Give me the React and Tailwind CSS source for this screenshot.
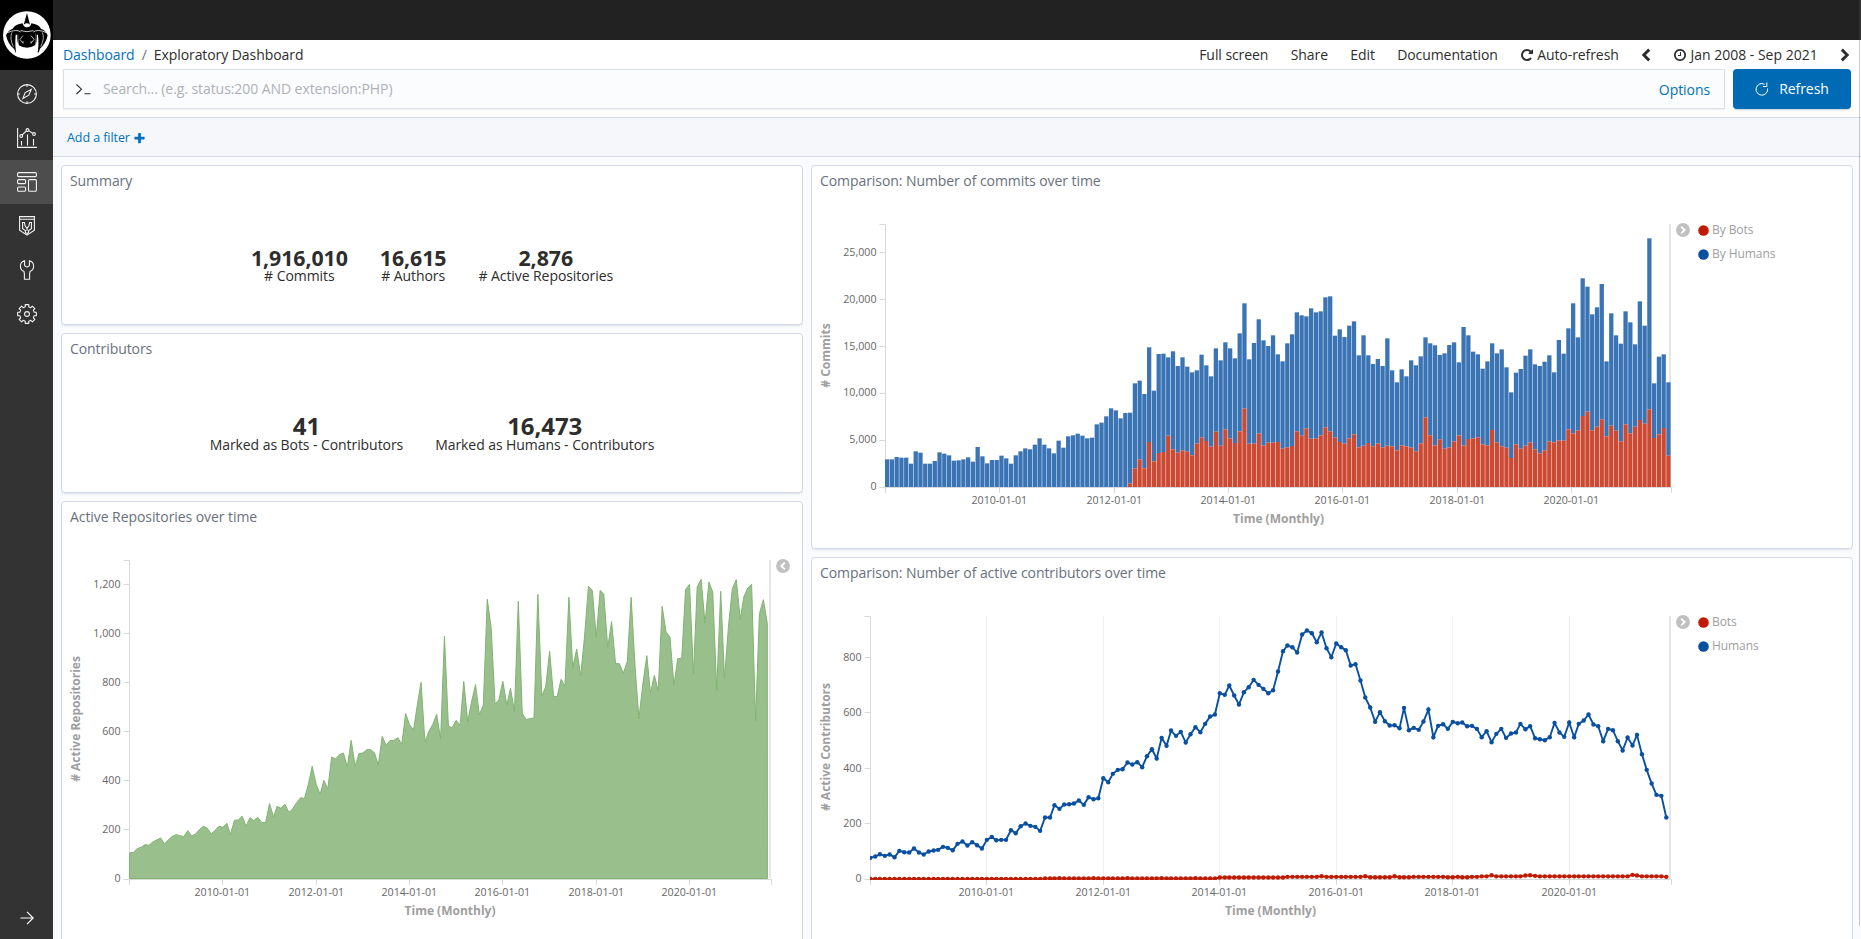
import React from "react";

/* ---------- time axis ---------- */
const DAY = 86400000;
const START = Date.UTC(2008, 0, 1);
const dayOf = (m) => (Date.UTC(2008, m, 1) - START) / DAY;
const YEARS = [2010, 2012, 2014, 2016, 2018, 2020];

/* ---------- monthly series, Jan 2008 - Sep 2021, as depths on a 1/3 px grid ---------- */
const REPOS = [
  968, 966, 955, 951, 943, 945, 935, 929, 923, 941, 928, 918, 913, 916, 919, 901, 917, 911, 898, 888, 894, 911, 900, 888,
  891, 879, 913, 870, 869, 858, 888, 862, 871, 861, 877, 877, 820, 860, 828, 834, 822, 846, 836, 817, 802, 805, 762, 708,
  762, 792, 750, 776, 680, 686, 673, 668, 710, 630, 708, 670, 668, 658, 658, 667, 704, 618, 645, 631, 630, 622, 642, 550,
  583, 599, 528, 456, 635, 603, 583, 552, 626, 318, 588, 592, 570, 585, 453, 574, 515, 463, 553, 525, 207, 290, 521, 509,
  453, 524, 474, 544, 213, 549, 568, 565, 563, 192, 497, 470, 363, 498, 499, 447, 468, 201, 412, 356, 437, 320, 168, 180,
  320, 180, 192, 352, 274, 400, 400, 429, 393, 201, 410, 565, 460, 376, 488, 435, 482, 228, 305, 320, 465, 385, 384, 178,
  162, 431, 170, 147, 279, 155, 186, 480, 183, 445, 287, 175, 148, 267, 200, 173, 162, 571, 250, 208, 280,
];
const COMMITS = [
  778, 778, 771, 773, 773, 791, 754, 758, 791, 791, 783, 757, 761, 766, 782, 781, 778, 772, 785, 741, 769, 790, 780, 780,
  767, 775, 791, 766, 754, 745, 748, 734, 715, 734, 745, 760, 722, 743, 709, 706, 701, 707, 715, 713, 673, 668, 649, 625,
  631, 655, 639, 638, 550, 542, 582, 442, 572, 462, 461, 472, 454, 498, 472, 500, 517, 511, 464, 496, 529, 445, 481, 427,
  445, 475, 400, 310, 478, 429, 358, 421, 438, 406, 463, 484, 430, 403, 337, 346, 349, 325, 337, 334, 292, 289, 407, 388,
  411, 377, 364, 466, 406, 466, 492, 477, 498, 415, 511, 547, 508, 529, 481, 496, 469, 412, 430, 436, 465, 460, 435, 427,
  487, 381, 406, 455, 463, 506, 484, 430, 460, 448, 502, 577, 518, 507, 467, 448, 493, 498, 485, 466, 517, 420, 461, 385,
  310, 412, 235, 260, 343, 322, 252, 484, 340, 406, 431, 334, 367, 433, 304, 377, 115, 550, 470, 463, 547,
];
/* bots only start committing in month 51 */
const BOT_COMMITS_FROM = 51;
const BOT_COMMITS = [
  850, 805, 778, 805, 726, 784, 759, 756, 707, 748, 758, 751, 755, 766, 731, 712, 723, 740, 695, 737, 688,
  715, 729, 694, 626, 731, 731, 700, 737, 728, 728, 726, 746, 742, 738, 694, 707, 685, 716, 716, 706, 682, 694, 712, 726,
  731, 715, 703, 742, 737, 729, 739, 730, 742, 737, 739, 751, 736, 739, 743, 754, 730, 652, 706, 736, 718, 746, 742, 724,
  706, 737, 717, 715, 712, 733, 736, 690, 727, 739, 743, 774, 733, 746, 737, 727, 748, 760, 751, 724, 727, 721, 722, 688,
  700, 691, 648, 635, 691, 680, 658, 709, 677, 692, 724, 673, 700, 680, 660, 671, 628, 714, 703, 684, 767,
];
const HUMANS = [
  803, 799, 792, 797, 793, 801, 782, 786, 787, 775, 787, 793, 784, 781, 779, 770, 773, 780, 761, 754, 766, 756, 765, 775,
  749, 740, 750, 749, 749, 720, 729, 708, 700, 707, 710, 722, 682, 682, 645, 656, 643, 642, 640, 631, 644, 621, 627, 624,
  564, 576, 551, 539, 537, 517, 523, 516, 531, 498, 477, 505, 443, 467, 421, 437, 425, 457, 432, 411, 426, 401, 379, 373,
  309, 314, 286, 316, 343, 306, 291, 269, 284, 296, 309, 300, 244, 183, 166, 171, 187, 133, 121, 129, 156, 127, 174, 201,
  160, 171, 180, 226, 222, 271, 322, 352, 395, 366, 393, 406, 405, 414, 353, 420, 413, 419, 394, 358, 441, 407, 402, 416,
  395, 399, 397, 408, 407, 416, 441, 423, 456, 431, 416, 443, 430, 427, 401, 417, 408, 444, 447, 450, 441, 398, 427, 440,
  397, 441, 401, 391, 373, 403, 408, 453, 416, 420, 453, 481, 442, 466, 434, 492, 539, 580, 614, 617, 682,
];
const BOTS = HUMANS.map((_, m) => {
  if (m < 36) return 866;
  if (m < 72) return m % 7 === 4 ? 864 : 865;
  if (m < 86) return 862;
  const peaks = { 93: 858, 102: 858, 108: 858, 128: 855, 135: 856, 136: 855, 137: 857, 157: 854, 158: 856, 164: 860 };
  if (peaks[m]) return peaks[m];
  if ([103, 104, 105, 106, 107, 109, 110, 111, 119, 120, 122, 123].includes(m)) return 861;
  return m > 125 ? 858.5 : 860;
});

/* ---------- chart pieces ---------- */
const AXIS = "#d9d9d9";

function XAxis({ x0, x1, y, xOf, title, titleX }) {
  return (
    <g>
      <path d={`M${x0} ${y + 5.5}V${y}H${x1}V${y + 5.5}`} fill="none" stroke={AXIS} />
      {YEARS.map((year) => {
        const x = Math.floor(xOf(year)) + 0.5;
        return (
          <g key={year}>
            <path d={`M${x} ${y}v5.5`} stroke={AXIS} />
            <text x={x - 0.2} y={y + 16} textAnchor="middle" className="fill-[#666] text-[10.67px]">
              {year}-01-01
            </text>
          </g>
        );
      })}
      <text x={titleX} y={y + 35} textAnchor="middle" className="fill-[#9e9e9e] text-[12px] font-bold">
        {title}
      </text>
    </g>
  );
}

function YAxis({ x, top, bottom, ticks, title, titleX, titleY }) {
  return (
    <g>
      <path d={`M${x - 6} ${top}H${x}V${bottom}H${x - 6}`} fill="none" stroke={AXIS} />
      {ticks.map(([label, y, lift = 0]) => (
        <g key={label}>
          <path d={`M${x - 6} ${y}h6`} stroke={AXIS} />
          <text x={x - 9} y={y + 3 - lift} textAnchor="end" className="fill-[#666] text-[10.67px]">
            {label}
          </text>
        </g>
      ))}
      <text
        transform={`translate(${titleX} ${titleY}) rotate(-90)`}
        textAnchor="middle"
        className="fill-[#9e9e9e] text-[12px] font-bold"
      >
        {title}
      </text>
    </g>
  );
}

const yearDays = (year) => dayOf((year - 2008) * 12);

function ReposChart() {
  const xOf = (d) => 129.5 + d * 0.12777;
  const line = REPOS.map((v, m) => `${xOf(dayOf(m)).toFixed(2)} ${(530.3 + v / 3).toFixed(2)}`).join("L");
  return (
    <svg viewBox="62 531 712 408" className="block h-[408px] w-[712px] shrink-0 tracking-normal">
      <rect x="769" y="560" width="2" height="318" fill="#e6e6e6" />
      <XAxis x0={129.5} x1={771.5} y={879.5} xOf={(yr) => xOf(yearDays(yr))} title="Time (Monthly)" titleX={450} />
      <YAxis
        x={129.5}
        top={560.5}
        bottom={879.5}
        ticks={[["1,200", 584.5], ["1,000", 633.5], ["800", 682.5], ["600", 731.5], ["400", 780.5], ["200", 829.5], ["0", 879.5, 1]]}
        title="# Active Repositories"
        titleX={80}
        titleY={719}
      />
      <path d={`M129.5 878.5L${line}L767.4 878.5Z`} fill="#99bf8d" stroke="#82b373" strokeWidth="1" />
    </svg>
  );
}

function CommitsChart() {
  const step = 4.764;
  const width = 4.29;
  const xOf = (d) => 885.5 + d * 0.1565;
  return (
    <svg viewBox="812 200 860 348" className="block h-[348px] w-[860px] shrink-0 tracking-normal">
      <rect x="1669" y="224" width="2" height="264" fill="#e6e6e6" />
      <XAxis x0={885.5} x1={1671.5} y={487.5} xOf={(yr) => xOf(yearDays(yr))} title="Time (Monthly)" titleX={1278.5} />
      <YAxis
        x={885.5}
        top={224.5}
        bottom={487.5}
        ticks={[["25,000", 252.5], ["20,000", 299.5], ["15,000", 346.5], ["10,000", 393.5, 1], ["5,000", 440.5, 1], ["0", 487.5, 1]]}
        title="# Commits"
        titleX={830}
        titleY={355.5}
      />
      {COMMITS.map((v, m) => {
        const red = m >= BOT_COMMITS_FROM ? BOT_COMMITS[m - BOT_COMMITS_FROM] : 861;
        const x = 885 + m * step;
        return (
          <g key={m}>
            <rect x={x} y={200 + v / 3} width={width} height={(red - v) / 3} fill="#3b74b4" />
            {red < 861 && <rect x={x} y={200 + red / 3} width={width} height={(861 - red) / 3} fill="#cc4933" />}
          </g>
        );
      })}
    </svg>
  );
}

function ContributorsChart() {
  const xOf = (d) => 870.3 + d * 0.15946;
  const pts = (s) => s.map((v, m) => [xOf(dayOf(m)), 590.2 + v / 3]);
  const path = (p) => "M" + p.map(([x, y]) => `${x.toFixed(2)} ${y.toFixed(2)}`).join("L");
  const series = [["#bf1b00", pts(BOTS)], ["#0a50a1", pts(HUMANS)]];
  return (
    <svg viewBox="812 592 860 347" className="block h-[347px] w-[860px] shrink-0 tracking-normal">
      {YEARS.map((yr) => (
        <path key={yr} d={`M${Math.floor(xOf(yearDays(yr))) + 0.5} 616V879`} stroke="#eeeeee" />
      ))}
      <rect x="1669" y="616" width="2" height="263" fill="#e6e6e6" />
      <XAxis x0={870.5} x1={1671.5} y={879.5} xOf={(yr) => xOf(yearDays(yr))} title="Time (Monthly)" titleX={1270.5} />
      <YAxis
        x={870.5}
        top={616.5}
        bottom={879.5}
        ticks={[["800", 657.5], ["600", 712.5], ["400", 768.5], ["200", 823.5], ["0", 879.5, 1]]}
        title="# Active Contributors"
        titleX={830}
        titleY={747}
      />
      <clipPath id="plot">
        <rect x="870" y="610" width="800" height="270" />
      </clipPath>
      <g clipPath="url(#plot)">
        {series.map(([color, p]) => (
          <g key={color}>
            <path d={path(p)} fill="none" stroke={color} strokeWidth="1.9" />
            {p.map(([x, y], i) => (
              <circle key={i} cx={x} cy={y} r="2.2" fill={color} />
            ))}
          </g>
        ))}
      </g>
    </svg>
  );
}

/* ---------- icons ---------- */
const Svg = ({ children, className = "size-5" }) => (
  <svg viewBox="0 0 20 20" fill="none" stroke="#f2f2f2" strokeWidth="1.1" className={className}>
    {children}
  </svg>
);

const CompassIcon = () => (
  <Svg>
    <circle cx="10" cy="10" r="9.4" />
    <path d="M5.8 14.6L8.2 8.6L14.2 5.4L11.8 11.2ZM10 .8v2M10 17.2v2M.8 10h2M17.2 10h2" />
  </Svg>
);
const VisualizeIcon = () => (
  <Svg>
    <path d="M.6 0V19.4H20M4.5 13v4.4M10.5 6.5v10.9M16.5 11v6.4M5 7.2L9.3 3M11.6 2.6L15.6 5.2" />
    <circle cx="4.2" cy="8" r="1.4" />
    <circle cx="10.5" cy="2" r="1.4" />
    <circle cx="17" cy="6" r="1.4" />
  </Svg>
);
const DashboardIcon = () => (
  <Svg>
    <rect x=".6" y=".6" width="18.8" height="4" rx="1" />
    <rect x=".6" y="7.6" width="8" height="4" rx="1" />
    <rect x=".6" y="15" width="8" height="4.2" rx="1" />
    <rect x="11.5" y="7.6" width="7.9" height="11.6" rx="1" />
  </Svg>
);
const TimelionIcon = () => (
  <Svg>
    <path d="M2 .6H18M2.6 .6V14.2L10 19.2L17.4 14.2V.6M2.6 3.2H17.4M5.6 6.5V12.6L8.4 14.6V16.4L10 17.6L11.6 16.4V14.6L14.4 12.6V6.5M5 6.5H7.4L8 9.6L10 12.6L12 9.6L12.6 6.5H15M10 12.6V15" />
  </Svg>
);
const WrenchIcon = () => (
  <Svg>
    <path d="M7.6 .8V5.8L10 7.2L12.4 5.8V.8C15 1.4 16.6 3.6 16.6 6.2C16.6 8.6 15.2 10.6 13 11.6L12.6 14V19.3H7.4V14L7 11.6C4.8 10.6 3.4 8.6 3.4 6.2C3.4 3.6 5 1.4 7.6 .8Z" />
  </Svg>
);
const gearPath = (() => {
  const out = [];
  for (let i = 0; i < 8; i++) {
    const a = (i * Math.PI) / 4;
    [[7.4, -0.24], [9.5, -0.19], [9.5, 0.19], [7.4, 0.24]].forEach(([r, d]) => {
      out.push(`${(10 + r * Math.sin(a + d)).toFixed(2)} ${(10 - r * Math.cos(a + d)).toFixed(2)}`);
    });
  }
  return `M${out.join("L")}Z`;
})();
const GearIcon = () => (
  <Svg>
    <path d={gearPath} strokeLinejoin="round" />
    <circle cx="10" cy="10" r="2.4" />
  </Svg>
);

const Fa = ({ d, className }) => (
  <svg viewBox="0 0 1792 1792" fill="currentColor" className={className}>
    <path d={d} />
  </svg>
);
const REPEAT =
  "M1664 256v448q0 26-19 45t-45 19h-448q-42 0-59-40-17-39 14-69l138-138q-148-137-349-137-104 0-198.500 40.500t-163.500 109.500-109.500 163.500-40.500 198.500 40.500 198.500 109.500 163.500 163.500 109.500 198.500 40.500q119 0 225-52t179-147q7-10 23-12 15 0 25 9l137 138q9 8 9.500 20.500t-7.500 22.500q-109 132-264 204.500t-327 72.500q-156 0-298-61t-245-164-164-245-61-298 61-298 164-245 245-164 298-61q147 0 284.500 55.500t244.500 156.500l130-129q29-31 70-14 39 17 39 59z";
const CLOCK =
  "M1024 544v448q0 14-9 23t-23 9h-320q-14 0-23-9t-9-23v-64q0-14 9-23t23-9h224v-352q0-14 9-23t23-9h64q14 0 23 9t9 23zm416 352q0-148-73-273t-198-198-273-73-273 73-198 198-73 273 73 273 198 198 273 73 273-73 198-198 73-273zm224 0q0 209-103 385.500t-279.500 279.500-385.500 103-385.500-103-279.500-279.500-103-385.500 103-385.500 279.500-279.500 385.500-103 385.500 103 279.500 279.500 103 385.500z";
const PLUS =
  "M1600 736v192q0 40-28 68t-68 28h-416v416q0 40-28 68t-68 28h-192q-40 0-68-28t-28-68v-416h-416q-40 0-68-28t-28-68v-192q0-40 28-68t68-28h416v-416q0-40 28-68t68-28h192q40 0 68 28t28 68v416h416q40 0 68 28t28 68z";

const Chevron = ({ right = false, className = "" }) => (
  <svg viewBox="0 0 10 14" fill="none" stroke="#2d2d2d" strokeWidth="2.9" className={`h-[14px] w-[10px] ${className}`}>
    <path d={right ? "M1.8 1.6L7.2 7L1.8 12.4" : "M8.2 1.6L2.8 7L8.2 12.4"} />
  </svg>
);

const LegendToggle = ({ right = false }) => (
  <svg viewBox="0 0 14 14" className="size-3.5 shrink-0">
    <circle cx="7" cy="7" r="6.9" fill="#c0c0c0" />
    <path d={right ? "M5.2 3.6L8.6 7L5.2 10.4" : "M8.8 3.6L5.4 7L8.8 10.4"} fill="none" stroke="#fff" strokeWidth="2" />
  </svg>
);

const Logo = () => (
  <svg viewBox="0 0 159 210" className="block h-[70px] w-[53px]">
    <circle cx="80.500" cy="105" r="71.500" fill="#fff" />
    <path d="M81 39L90 74Q81 66 71 74Z" fill="#000" />
    <path
      d="M38 86Q46 73 68 70Q70 82 81 82Q92 82 94 70Q115 73 123 86Q136 90 143 106Q138 130 120 146Q118 150 117 155L113 160Q105 140 106 112L107 100H54L55 112Q56 140 48 160L43 148Q23 132 18 106Q25 90 38 86Z"
      fill="#000"
    />
    <path d="M54 98H107L105 136Q94 143 81 143Q67 143 56 136Z" fill="#000" />
    <path
      d="M36 97Q28 115 40 140M127 97Q135 115 122 140"
      fill="none"
      stroke="#fff"
      strokeWidth="2"
    />
    <path d="M22 98Q50 86 62 96M140 98Q112 86 100 96M62 92Q81 98 100 92" fill="none" stroke="#fff" strokeWidth="2.400" />
    <path d="M47 104Q44 140 50 165Q59 162 59 150V142Q50 126 52 104ZM114 104Q118 140 111 165Q103 162 103 150V142Q112 126 110 104Z" fill="#fff" />
    <path d="M69 107L60 118L69 130V123M93 107L102 118L93 130V123" fill="none" stroke="#fff" strokeWidth="2" />
  </svg>
);

/* ---------- layout ---------- */
function Panel({ title, className = "", children }) {
  return (
    <section
      className={`flex flex-col overflow-hidden rounded-[4px] border border-[#d3dae6] bg-white shadow-[0_2px_2px_-1px_rgba(152,162,179,0.3)] ${className}`}
    >
      <h2 className="h-[29px] shrink-0 pl-2 text-[14px] leading-[30px] text-[#69707d]">{title}</h2>
      {children}
    </section>
  );
}

const Metric = ({ value, label, big = false }) => (
  <div className="flex flex-col items-center">
    <span className={`font-bold text-[#2d2d2d] ${big ? "text-[24px] leading-[24px]" : "text-[21.33px] leading-[22px]"}`}>{value}</span>
    <span className="text-[14px] leading-[14px] text-[#2d2d2d]">{label}</span>
  </div>
);

const Legend = ({ items }) => (
  <ul className="flex flex-col">
    {items.map(([color, name]) => (
      <li key={name} className="flex h-6 items-center gap-[3px] text-[12px] text-[#9e9e9e]">
        <svg viewBox="0 0 10 10" className="size-[11px]">
          <circle cx="5" cy="5" r="4.8" fill={color} />
        </svg>
        {name}
      </li>
    ))}
  </ul>
);

const NAV = [CompassIcon, VisualizeIcon, DashboardIcon, TimelionIcon, WrenchIcon, GearIcon];

export default function App() {
  return (
    <div className="relative flex h-[939px] w-[1861px] overflow-hidden bg-[#fafbfd] font-['Open_Sans','Noto_Sans',sans-serif] text-[14px] tracking-[-0.07px] text-[#2d2d2d]">
      <aside className="flex w-[53px] shrink-0 flex-col bg-[#333]">
        <div className="mb-0.5 h-[70px] bg-black">
          <Logo />
        </div>
        {NAV.map((Icon, i) => (
          <div key={i} className={`flex h-11 items-center justify-center pl-px ${i === 2 ? "bg-[#4d4d4d]" : ""}`}>
            <Icon />
          </div>
        ))}
        <div className="mt-auto flex h-[42px] items-center justify-center pl-px">
          <svg viewBox="0 0 14 14" fill="none" stroke="#fff" strokeWidth="1.200" className="size-3.5">
            <path d="M.5 7H13M7 .8L13.200 7L7 13.200" />
          </svg>
        </div>
      </aside>

      <main className="flex min-w-0 flex-1 flex-col">
        <div className="h-10 shrink-0 bg-[#222]" />

        <header className="flex h-[77px] shrink-0 flex-col bg-white pl-[10px]">
          <div className="flex h-[29px] items-center">
            <nav className="flex items-center">
              <a className="text-[#0071bb]">Dashboard</a>
              <span className="mx-[7px] text-[#69707d]">/</span>
              <span className="text-[#2d2d2d]">Exploratory Dashboard</span>
            </nav>
            <div className="ml-auto flex items-center gap-[22.3px] pr-[11px]">
              <span>Full screen</span>
              <span>Share</span>
              <span>Edit</span>
              <span>Documentation</span>
              <span className="flex items-center gap-[3px]">
                <Fa d={REPEAT} className="size-[14px]" />
                Auto-refresh
              </span>
              <Chevron />
              <span className="flex items-center gap-[3px] tracking-normal">
                <Fa d={CLOCK} className="size-[14px]" />
                Jan 2008 - Sep 2021
              </span>
              <Chevron right />
            </div>
          </div>
          <div className="flex h-10 gap-2">
            <div className="flex h-10 w-[1662px] items-center border border-[#dde0e5] bg-[#fbfcfd] pr-[14px] pl-3 shadow-[0_1px_2px_rgba(152,162,179,0.2)]">
              <svg viewBox="0 0 15 11" fill="none" stroke="#2d2d2d" strokeWidth="1.100" className="h-[11px] w-[15px]">
                <path d="M.5 .5L5.500 5.200L.5 10M8.500 9.800H14.500" />
              </svg>
              <span className="ml-3 pb-px text-[#aeb1b8]">Search... (e.g. status:200 AND extension:PHP)</span>
              <a className="ml-auto pt-px text-[#0071bb]">Options</a>
            </div>
            <button className="flex h-10 w-[118px] items-center justify-center gap-[10px] rounded-[4px] bg-[#006bb4] pb-px text-white shadow-[0_2px_2px_-1px_rgba(54,97,126,0.3)]">
              <svg viewBox="0 0 14 14" fill="none" stroke="#fff" className="size-3.5">
                <path d="M12.600 6.500A5.800 5.800 0 1 1 9.500 2.200M11.800 .5V4.500H8" />
              </svg>
              Refresh
            </button>
          </div>
        </header>

        <div className="flex h-10 shrink-0 items-center border-y border-[#d3dae6] bg-[#f5f7fa] pt-[2px] pl-[14px] text-[12.5px] text-[#0071bb]">
          Add a filter
          <Fa d={PLUS} className="ml-[3px] size-[13px]" />
        </div>

        <div className="flex gap-2 pt-2 pl-2">
          <div className="flex w-[742px] flex-col gap-2">
            <Panel title="Summary" className="h-[160px]">
              <div className="flex justify-center gap-8 pt-[52px]">
                <Metric value="1,916,010" label="# Commits" />
                <Metric value="16,615" label="# Authors" />
                <Metric value="2,876" label="# Active Repositories" />
              </div>
            </Panel>
            <Panel title="Contributors" className="h-[160px]">
              <div className="flex justify-center gap-8 pt-[51px]">
                <Metric big value="41" label="Marked as Bots - Contributors" />
                <Metric big value="16,473" label="Marked as Humans - Contributors" />
              </div>
            </Panel>
            <Panel title="Active Repositories over time" className="h-[460px]">
              <div className="flex">
                <ReposChart />
                <div className="pt-7 pl-[2px]">
                  <LegendToggle />
                </div>
              </div>
            </Panel>
          </div>

          <div className="flex w-[1042px] flex-col gap-2">
            <Panel title="Comparison: Number of commits over time" className="h-[384px]">
              <div className="flex pt-[5px]">
                <CommitsChart />
                <div className="flex gap-2 pt-[18px] pl-[4px]">
                  <div className="pt-[5px]">
                    <LegendToggle right />
                  </div>
                  <Legend items={[["#bf1b00", "By Bots"], ["#0a50a1", "By Humans"]]} />
                </div>
              </div>
            </Panel>
            <Panel title="Comparison: Number of active contributors over time" className="h-[460px]">
              <div className="flex pt-[5px]">
                <ContributorsChart />
                <div className="flex gap-2 pt-[18px] pl-[4px]">
                  <div className="pt-[5px]">
                    <LegendToggle right />
                  </div>
                  <Legend items={[["#bf1b00", "Bots"], ["#0a50a1", "Humans"]]} />
                </div>
              </div>
            </Panel>
          </div>
        </div>
      </main>

      <div className="absolute top-0 right-0 h-[926px] w-[2px] border-l border-black/20 bg-white/10" />
    </div>
  );
}
